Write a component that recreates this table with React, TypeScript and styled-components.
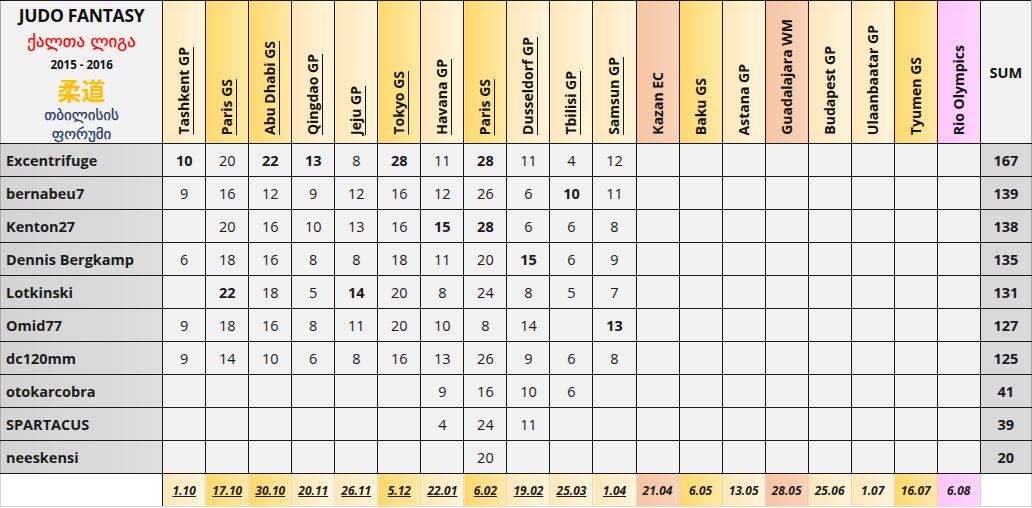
import React from 'react';
import styled, { createGlobalStyle } from 'styled-components';

type Tone = 'light' | 'gold' | 'peach' | 'pink';

const GlobalStyle = createGlobalStyle`
  body {
    margin: 0;
    background: #ffffff;
    font-family: "Open Sans", "Noto Sans", sans-serif;
    color: #1b1b1b;
  }
`;

const toneFill: Record<Tone, string> = {
  light: 'linear-gradient(90deg, #fde8bb 0%, #fff4da 100%)',
  gold: 'linear-gradient(90deg, #fdd86c 0%, #ffe9a6 100%)',
  peach: 'linear-gradient(90deg, #f6c4a3 0%, #f9d2b9 100%)',
  pink: 'linear-gradient(90deg, #fcc6fc 0%, #ffd4ff 100%)',
};

// ---- data --------------------------------------------------------------------------------
const events: { name: string; date: string; tone: Tone; underline: boolean }[] = [
  { name: 'Tashkent GP', date: '1.10', tone: 'light', underline: true },
  { name: 'Paris GS', date: '17.10', tone: 'gold', underline: true },
  { name: 'Abu Dhabi GS', date: '30.10', tone: 'gold', underline: true },
  { name: 'Qingdao GP', date: '20.11', tone: 'light', underline: true },
  { name: 'Jeju GP', date: '26.11', tone: 'light', underline: true },
  { name: 'Tokyo GS', date: '5.12', tone: 'gold', underline: true },
  { name: 'Havana GP', date: '22.01', tone: 'light', underline: true },
  { name: 'Paris GS', date: '6.02', tone: 'gold', underline: true },
  { name: 'Dusseldorf GP', date: '19.02', tone: 'light', underline: true },
  { name: 'Tbilisi GP', date: '25.03', tone: 'light', underline: true },
  { name: 'Samsun GP', date: '1.04', tone: 'light', underline: true },
  { name: 'Kazan EC', date: '21.04', tone: 'peach', underline: false },
  { name: 'Baku GS', date: '6.05', tone: 'gold', underline: false },
  { name: 'Astana GP', date: '13.05', tone: 'light', underline: false },
  { name: 'Guadalajara WM', date: '28.05', tone: 'peach', underline: false },
  { name: 'Budapest GP', date: '25.06', tone: 'light', underline: false },
  { name: 'Ulaanbaatar GP', date: '1.07', tone: 'light', underline: false },
  { name: 'Tyumen GS', date: '16.07', tone: 'gold', underline: false },
  { name: 'Rio Olympics', date: '6.08', tone: 'pink', underline: false },
];

// "*" marks a best score of the round (bold in the sheet)
const players: { name: string; scores: string[]; sum: number }[] = [
  { name: 'Excentrifuge', scores: ['10*', '20', '22*', '13*', '8', '28*', '11', '28*', '11', '4', '12'], sum: 167 },
  { name: 'bernabeu7', scores: ['9', '16', '12', '9', '12', '16', '12', '26', '6', '10*', '11'], sum: 139 },
  { name: 'Kenton27', scores: ['', '20', '16', '10', '13', '16', '15*', '28*', '6', '6', '8'], sum: 138 },
  { name: 'Dennis Bergkamp', scores: ['6', '18', '16', '8', '8', '18', '11', '20', '15*', '6', '9'], sum: 135 },
  { name: 'Lotkinski', scores: ['', '22*', '18', '5', '14*', '20', '8', '24', '8', '5', '7'], sum: 131 },
  { name: 'Omid77', scores: ['9', '18', '16', '8', '11', '20', '10', '8', '14', '', '13*'], sum: 127 },
  { name: 'dc120mm', scores: ['9', '14', '10', '6', '8', '16', '13', '26', '9', '6', '8'], sum: 125 },
  { name: 'otokarcobra', scores: ['', '', '', '', '', '', '9', '16', '10', '6'], sum: 41 },
  { name: 'SPARTACUS', scores: ['', '', '', '', '', '', '4', '24', '11'], sum: 39 },
  { name: 'neeskensi', scores: ['', '', '', '', '', '', '', '20'], sum: 20 },
];

// ---- styles ------------------------------------------------------------------------------
const Sheet = styled.table`
  border-collapse: collapse;
  table-layout: fixed;
  width: 1032px;
  border-left: 1px solid #a8a8a8;
  border-top: 1px solid #a8a8a8;
`;

const TitleCell = styled.th`
  width: 161px;
  height: 142px;
  padding: 0;
  background: #f2f2f2;
  border: 1px solid #1a1a1a;
  border-left-color: #a8a8a8;
  vertical-align: top;
`;

const TitleStack = styled.div`
  height: 142px;
  display: flex;
  flex-direction: column;
  align-items: center;
  padding-top: 2px;
  box-sizing: border-box;
`;

const Title = styled.div`
  font-size: 17.5px;
  font-weight: 700;
  letter-spacing: -0.3px;
  line-height: 24px;
  color: #111;
`;

const Georgian = styled.div<{ $color: string; $size: number; $line: number }>`
  font-family: "DejaVu Sans", sans-serif;
  font-size: ${({ $size }) => $size}px;
  font-weight: 400;
  color: ${({ $color }) => $color};
  line-height: ${({ $line }) => $line}px;
  -webkit-text-stroke: 0.25px ${({ $color }) => $color};
`;

const Season = styled.div`
  font-size: 11.5px;
  font-weight: 700;
  line-height: 20px;
  color: #111;
`;

const Kanji = styled.div`
  font-family: "Noto Sans CJK JP", "Noto Sans CJK SC", sans-serif;
  font-size: 24px;
  font-weight: 700;
  line-height: 30px;
  color: #ffc000;
`;

const EventHead = styled.th<{ $tone: Tone }>`
  width: 42px;
  padding: 0 0 3px;
  background: ${({ $tone }) => toneFill[$tone]};
  border: 1px solid #1a1a1a;
  vertical-align: bottom;
  text-align: center;
`;

const VerticalLabel = styled.span<{ $underline: boolean }>`
  display: inline-block;
  writing-mode: vertical-rl;
  transform: rotate(180deg);
  white-space: nowrap;
  font-size: 14px;
  font-weight: 700;
  line-height: 18px;
  color: #141414;
  text-decoration: ${({ $underline }) => ($underline ? 'underline' : 'none')};
  text-underline-offset: 2px;
`;

const SumHead = styled.th`
  width: 50px;
  padding: 0;
  background: #f2f2f2;
  border: 1px solid #1a1a1a;
  border-right-color: #a8a8a8;
  font-size: 14.5px;
  font-weight: 700;
  color: #141414;
`;

const Row = styled.tr`
  height: 33px;
`;

const NameCell = styled.td`
  padding: 0 0 0 5px;
  background: linear-gradient(90deg, #d3d3d3 0%, #dedede 100%);
  border: 1px solid #1a1a1a;
  border-left-color: #a8a8a8;
  font-size: 14.5px;
  font-weight: 700;
  white-space: nowrap;
`;

const ScoreCell = styled.td<{ $best: boolean }>`
  padding: 0;
  background: #f2f2f2;
  border: 1px solid #1a1a1a;
  text-align: center;
  font-size: 14.5px;
  font-weight: ${({ $best }) => ($best ? 700 : 400)};
`;

const SumCell = styled.td`
  padding: 0;
  background: #d9d9d9;
  border: 1px solid #1a1a1a;
  border-right-color: #a8a8a8;
  text-align: center;
  font-size: 14.5px;
  font-weight: 700;
`;

const BlankFoot = styled.td<{ $edge: 'left' | 'right' }>`
  padding: 0;
  background: #ffffff;
  border: 1px solid #d4d4d4;
  border-top-color: #1a1a1a;
  ${({ $edge }) => ($edge === 'left' ? 'border-right-color: #1a1a1a;' : 'border-left-color: #1a1a1a;')}
`;

const DateCell = styled.td<{ $tone: Tone; $underline: boolean }>`
  padding: 0;
  background: ${({ $tone }) => toneFill[$tone]};
  border: 1px solid #e2dccb;
  border-top-color: #1a1a1a;
  text-align: center;
  font-size: 12px;
  font-style: italic;
  font-weight: 700;
  color: #1c1c1c;
  text-decoration: ${({ $underline }) => ($underline ? 'underline' : 'none')};
`;

// ---- page --------------------------------------------------------------------------------
export default function App() {
  return (
    <>
      <GlobalStyle />
      <Sheet>
        <thead>
          <tr>
            <TitleCell>
              <TitleStack>
                <Title>JUDO FANTASY</Title>
                <Georgian $color="#ff0000" $size={17} $line={28}>ქალთა ლიგა</Georgian>
                <Season>2015 - 2016</Season>
                <Kanji>柔道</Kanji>
                <Georgian $color="#1f3864" $size={15} $line={21}>თბილისის</Georgian>
                <Georgian $color="#1f3864" $size={15} $line={17}>ფორუმი</Georgian>
              </TitleStack>
            </TitleCell>
            {events.map((ev, i) => (
              <EventHead key={`head_${i}`} $tone={ev.tone}>
                <VerticalLabel $underline={ev.underline}>{ev.name}</VerticalLabel>
              </EventHead>
            ))}
            <SumHead>SUM</SumHead>
          </tr>
        </thead>
        <tbody>
          {players.map((p) => (
            <Row key={p.name}>
              <NameCell>{p.name}</NameCell>
              {events.map((_, i) => {
                const raw = p.scores[i] ?? '';
                const best = raw.endsWith('*');
                return (
                  <ScoreCell key={`${p.name}_${i}`} $best={best}>
                    {raw.replace('*', '')}
                  </ScoreCell>
                );
              })}
              <SumCell>{p.sum}</SumCell>
            </Row>
          ))}
          <Row>
            <BlankFoot $edge="left" />
            {events.map((ev, i) => (
              <DateCell key={`date_${i}`} $tone={ev.tone} $underline={ev.underline}>
                {ev.date}
              </DateCell>
            ))}
            <BlankFoot $edge="right" />
          </Row>
        </tbody>
      </Sheet>
    </>
  );
}
